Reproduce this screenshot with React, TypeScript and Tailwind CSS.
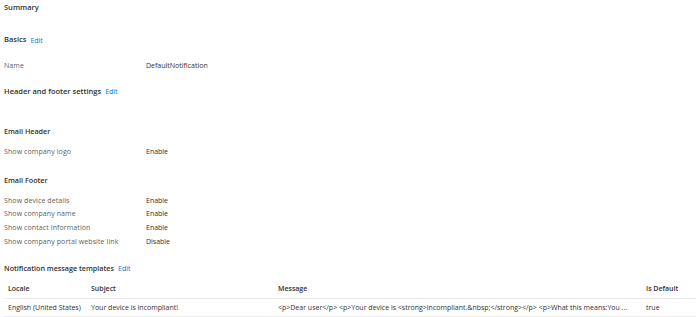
import React from 'react';

const font = { fontFamily: '"Segoe UI", "Open Sans", "Liberation Sans", sans-serif' };

const Edit = () => <span className="ml-[4px] text-[7px] font-normal text-[#0078d4]">Edit</span>;

const Row = ({ label, value }: { label: string; value: string }) => (
  <div className="flex h-[13.7px] items-center">
    <div className="w-[142px] text-[#605e5c] tracking-[0.1px]">{label}</div>
    <div className="text-[#323130]">{value}</div>
  </div>
);

const App: React.FC = () => {
  return (
    <div className="w-[700px] h-[317px] bg-white overflow-hidden text-[7px] leading-none" style={font}>
      <div className="px-[4px]">
        <div className="h-[16px] flex items-center font-semibold text-[#323130] text-[7.5px]">Summary</div>
        <div className="mt-[16px] h-[16px] flex items-center font-semibold text-[#323130] text-[7.5px]">
          Basics<Edit />
        </div>
        <div className="mt-[11px]">
          <Row label="Name" value="DefaultNotification" />
        </div>
        <div className="mt-[11px] h-[16px] flex items-center font-semibold text-[#323130] text-[7.5px]">
          Header and footer settings<Edit />
        </div>
        <div className="mt-[24px] h-[16px] flex items-center font-semibold text-[#323130] text-[7.2px]">Email Header</div>
        <div className="mt-[5px]">
          <Row label="Show company logo" value="Enable" />
        </div>
        <div className="mt-[14px] h-[16px] flex items-center font-semibold text-[#323130] text-[7.2px]">Email Footer</div>
        <div className="mt-[5px]">
          <Row label="Show device details" value="Enable" />
          <Row label="Show company name" value="Enable" />
          <Row label="Show contact information" value="Enable" />
          <Row label="Show company portal website link" value="Disable" />
        </div>
        <div className="mt-[12px] h-[16px] flex items-center font-semibold text-[#323130] text-[7.2px]">
          Notification message templates<Edit />
        </div>
      </div>
      <div className="mt-[3px] px-[4px]">
        <div className="flex h-[20px] items-center border-b border-[#edebe9] font-semibold text-[#323130]">
          <div className="w-[87px] pl-[4px]">Locale</div>
          <div className="w-[187px]">Subject</div>
          <div className="w-[368px]">Message</div>
          <div>Is Default</div>
        </div>
        <div className="flex h-[18px] items-center border-b border-[#edebe9] text-[#323130]">
          <div className="w-[87px] pl-[4px] whitespace-nowrap">English (United States)</div>
          <div className="w-[187px]">Your device is incompliant!</div>
          <div className="w-[368px] whitespace-nowrap">
            {'<p>Dear user</p> <p>Your device is <strong>incompliant.&nbsp;</strong></p> <p>What this means:You ...'}
          </div>
          <div>true</div>
        </div>
      </div>
    </div>
  );
};

export default App;
